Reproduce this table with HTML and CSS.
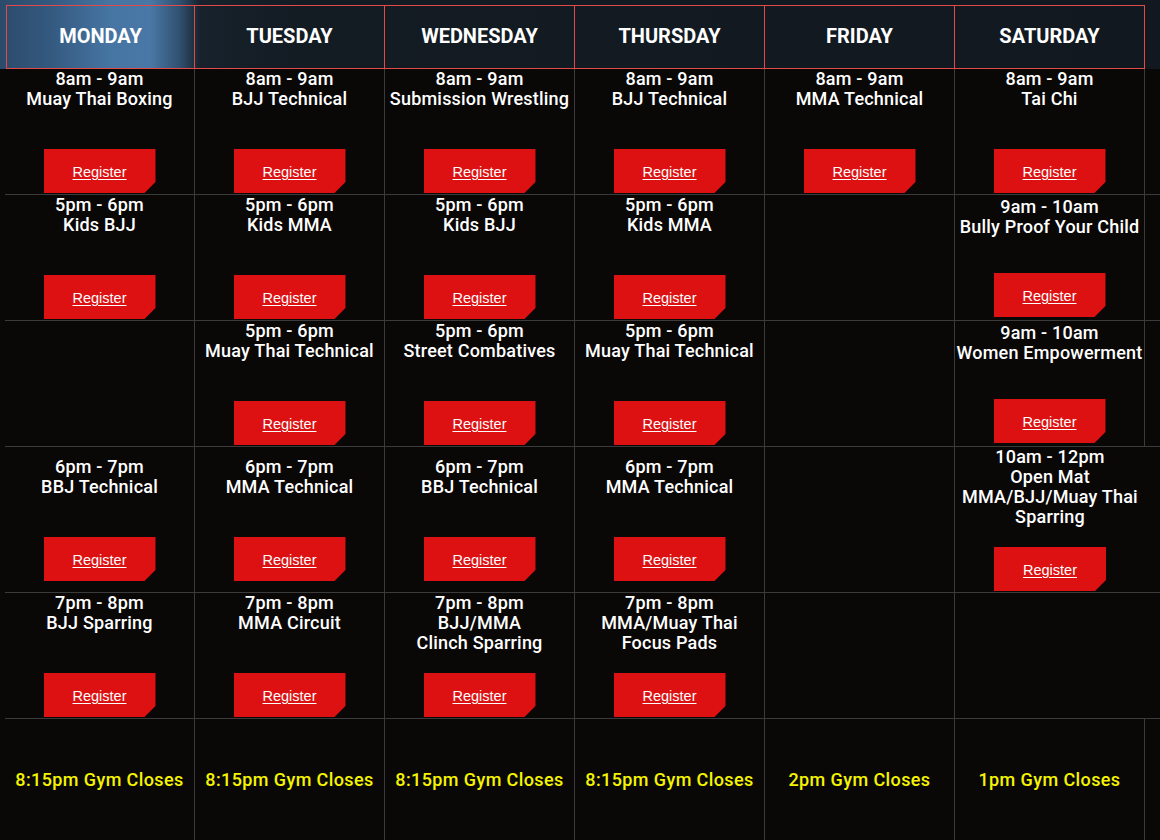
FILE: index.html
```html
<!DOCTYPE html>
<html lang="en">
<head>
    <meta charset="UTF-8">
    <meta name="viewport" content="width=device-width, initial-scale=1.0">
    <title>Class Schedule</title>
    <link rel="stylesheet" href="styles.css">
</head>
<body>
    <div class="schedule">
        <div class="days">
            <div class="day day-first">MONDAY</div>
            <div class="day">TUESDAY</div>
            <div class="day">WEDNESDAY</div>
            <div class="day">THURSDAY</div>
            <div class="day">FRIDAY</div>
            <div class="day">SATURDAY</div>
        </div>

        <div class="grid">
            <!-- row 1 -->
            <div class="cell"><div class="slot">8am - 9am<br>Muay Thai Boxing</div><a href="#" class="register">Register</a></div>
            <div class="cell"><div class="slot">8am - 9am<br>BJJ Technical</div><a href="#" class="register">Register</a></div>
            <div class="cell"><div class="slot">8am - 9am<br>Submission Wrestling</div><a href="#" class="register">Register</a></div>
            <div class="cell"><div class="slot">8am - 9am<br>BJJ Technical</div><a href="#" class="register">Register</a></div>
            <div class="cell"><div class="slot">8am - 9am<br>MMA Technical</div><a href="#" class="register">Register</a></div>
            <div class="cell"><div class="slot">8am - 9am<br>Tai Chi</div><a href="#" class="register">Register</a></div>
            <div class="cell"></div>

            <!-- row 2 -->
            <div class="cell"><div class="slot">5pm - 6pm<br>Kids BJJ</div><a href="#" class="register">Register</a></div>
            <div class="cell"><div class="slot">5pm - 6pm<br>Kids MMA</div><a href="#" class="register">Register</a></div>
            <div class="cell"><div class="slot">5pm - 6pm<br>Kids BJJ</div><a href="#" class="register">Register</a></div>
            <div class="cell"><div class="slot">5pm - 6pm<br>Kids MMA</div><a href="#" class="register">Register</a></div>
            <div class="cell"></div>
            <div class="cell cell-shift"><div class="slot">9am - 10am<br>Bully Proof Your Child</div><a href="#" class="register">Register</a></div>
            <div class="cell"></div>

            <!-- row 3 -->
            <div class="cell"></div>
            <div class="cell"><div class="slot">5pm - 6pm<br>Muay Thai Technical</div><a href="#" class="register">Register</a></div>
            <div class="cell"><div class="slot">5pm - 6pm<br>Street Combatives</div><a href="#" class="register">Register</a></div>
            <div class="cell"><div class="slot">5pm - 6pm<br>Muay Thai Technical</div><a href="#" class="register">Register</a></div>
            <div class="cell"></div>
            <div class="cell cell-shift"><div class="slot">9am - 10am<br>Women Empowerment</div><a href="#" class="register">Register</a></div>
            <div class="cell"></div>

            <!-- row 4 -->
            <div class="cell"><div class="slot">6pm - 7pm<br>BBJ Technical</div><a href="#" class="register">Register</a></div>
            <div class="cell"><div class="slot">6pm - 7pm<br>MMA Technical</div><a href="#" class="register">Register</a></div>
            <div class="cell"><div class="slot">6pm - 7pm<br>BBJ Technical</div><a href="#" class="register">Register</a></div>
            <div class="cell"><div class="slot">6pm - 7pm<br>MMA Technical</div><a href="#" class="register">Register</a></div>
            <div class="cell"></div>
            <div class="cell cell-open"><div class="slot">10am - 12pm<br>Open Mat<br>MMA/BJJ/Muay Thai<br>Sparring</div><a href="#" class="register">Register</a></div>
            <div class="cell"></div>

            <!-- row 5 -->
            <div class="cell"><div class="slot">7pm - 8pm<br>BJJ Sparring</div><a href="#" class="register">Register</a></div>
            <div class="cell"><div class="slot">7pm - 8pm<br>MMA Circuit</div><a href="#" class="register">Register</a></div>
            <div class="cell"><div class="slot">7pm - 8pm<br>BJJ/MMA<br>Clinch Sparring</div><a href="#" class="register">Register</a></div>
            <div class="cell"><div class="slot">7pm - 8pm<br>MMA/Muay Thai<br>Focus Pads</div><a href="#" class="register">Register</a></div>
            <div class="cell"></div>
            <div class="cell cell-open"></div>
            <div class="cell"></div>

            <!-- closing times -->
            <div class="cell cell-close">8:15pm Gym Closes</div>
            <div class="cell cell-close">8:15pm Gym Closes</div>
            <div class="cell cell-close">8:15pm Gym Closes</div>
            <div class="cell cell-close">8:15pm Gym Closes</div>
            <div class="cell cell-close">2pm Gym Closes</div>
            <div class="cell cell-close">1pm Gym Closes</div>
            <div class="cell cell-close"></div>
        </div>
    </div>
</body>
</html>
```

FILE: styles.css
```css
body {
    margin: 0;
    padding: 0;
    background-color: #0a0707;
    font-family: 'Roboto', 'Liberation Sans', sans-serif;
    color: #fff;
}

.schedule {
    width: 1160px;
    height: 840px;
    overflow: hidden;
}

/* header row */
.days {
    display: flex;
    height: 69px;
    padding: 5px 0 0 6px;
    box-sizing: border-box;
    background: linear-gradient(90deg, #2c4b6a 0, #34597f 50px, #4675a3 110px, #4a78a6 150px, #30506f 180px, #17222c 200px, #131b23 300px, #111820 100%);
}

.day {
    width: 190px;
    height: 64px;
    box-sizing: border-box;
    padding-bottom: 2px;
    border: 1px solid #e24a4a;
    border-left: none;
    display: flex;
    justify-content: center;
    align-items: center;
    font-size: 20px;
    font-weight: 700;
}

.day-first {
    width: 189px;
    border-left: 1px solid #e24a4a;
}

/* timetable */
.grid {
    display: grid;
    grid-template-columns: repeat(7, 190px);
    margin-left: 5px;
}

.cell {
    display: flex;
    flex-direction: column;
    align-items: center;
    justify-content: center;
    padding-bottom: 1px;
    border-right: 1px solid #3b3b3b;
    border-bottom: 1px solid #3b3b3b;
    text-align: center;
}

.cell-open {
    border-right: none;
}

.slot {
    min-height: 60px;
    padding-bottom: 20px;
    font-size: 18px;
    font-weight: 500;
    letter-spacing: 0.2px;
    line-height: 20px;
}

.cell-shift .slot {
    min-height: 56px;
}

.register {
    display: flex;
    justify-content: center;
    align-items: center;
    box-sizing: border-box;
    width: 112px;
    height: 44px;
    padding-top: 2px;
    background: #dd1111;
    color: #fff;
    font-family: 'Liberation Sans', Arial, sans-serif;
    font-size: 14.5px;
    text-decoration: underline;
    text-underline-offset: 2px;
    clip-path: polygon(0 0, 100% 0, 100% calc(100% - 11px), calc(100% - 11px) 100%, 0 100%);
}

.cell-close {
    min-height: 120px;
    color: #f5f500;
    font-size: 18px;
    font-weight: 500;
    letter-spacing: 0.4px;
}
```
